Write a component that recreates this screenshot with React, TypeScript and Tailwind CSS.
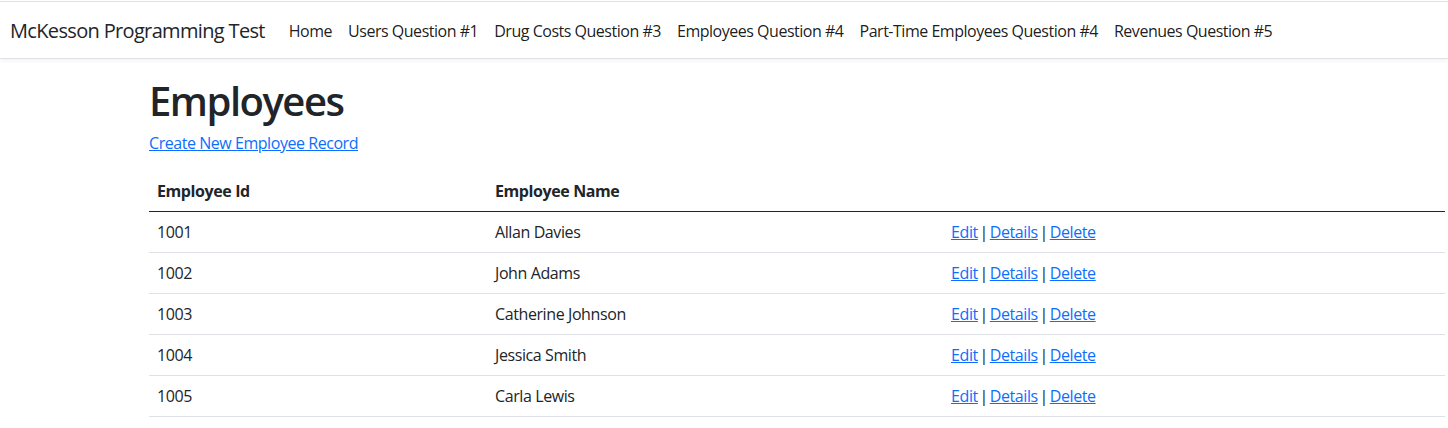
const navLinks = [
  'Home',
  'Users Question #1',
  'Drug Costs Question #3',
  'Employees Question #4',
  'Part-Time Employees Question #4',
  'Revenues Question #5',
];

const employees = [
  { id: 1001, name: 'Allan Davies' },
  { id: 1002, name: 'John Adams' },
  { id: 1003, name: 'Catherine Johnson' },
  { id: 1004, name: 'Jessica Smith' },
  { id: 1005, name: 'Carla Lewis' },
];

const App = () => {
  return (
    <div className="min-h-[428px] w-[1448px] overflow-hidden bg-white font-['Open_Sans',sans-serif] text-[#212529]">
      <nav className="mt-px flex h-[58px] items-center border-y border-[#dee2e6] bg-white pt-[2px] shadow-[0_2px_4px_rgba(0,0,0,0.05)]">
        <span className="ml-[10px] mr-[16px] text-[20px] tracking-[-0.66px]">McKesson Programming Test</span>
        <ul className="flex">
          {navLinks.map((l) => (
            <li key={l} className="px-[8px] text-[16px] tracking-[-0.48px] text-black/90">
              {l}
            </li>
          ))}
        </ul>
      </nav>

      <main className="pl-[149px] pt-[18px]">
        <h1 className="text-[40px] font-semibold leading-[1.2] tracking-[-1.5px]">Employees</h1>
        <a href="#" className="mt-[6px] block w-fit text-[16px] tracking-[-0.45px] text-[#0d6efd] underline">
          Create New Employee Record
        </a>

        <table className="mt-[16px] w-[1296px] border-collapse text-left text-[16px] tracking-[-0.4px]">
          <thead>
            <tr className="border-b border-[#212529]">
              <th className="w-[338px] px-[8px] py-[8px] font-bold">Employee Id</th>
              <th className="w-[456px] px-[8px] py-[8px] font-bold">Employee Name</th>
              <th className="px-[8px] py-[8px]"></th>
            </tr>
          </thead>
          <tbody>
            {employees.map((e) => (
              <tr key={e.id} className="h-[41px] border-b border-[#dee2e6]">
                <td className="px-[8px]">{e.id}</td>
                <td className="px-[8px]">{e.name}</td>
                <td className="px-[8px] [word-spacing:-2px]">
                  <a href="#" className="text-[#0d6efd] underline">Edit</a> |{' '}
                  <a href="#" className="text-[#0d6efd] underline">Details</a> |{' '}
                  <a href="#" className="text-[#0d6efd] underline">Delete</a>
                </td>
              </tr>
            ))}
          </tbody>
        </table>
      </main>
    </div>
  );
};

export default App;
